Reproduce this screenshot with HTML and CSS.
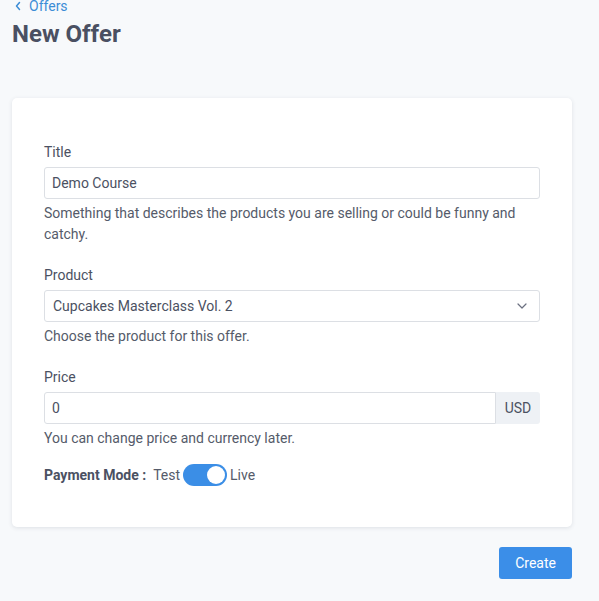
FILE: index.html
```html
<!DOCTYPE html>
<html>
<head>
<meta charset="utf-8">
<link rel="stylesheet" href="styles.css">
</head>
<body>
<div class="page">
  <a class="back" href="#"><svg class="back-icon" width="8" height="10" viewBox="0 0 8 10"><path d="M5.5 1.5 L2.5 5 L5.5 8.5" fill="none" stroke="currentColor" stroke-width="1.5" stroke-linecap="round" stroke-linejoin="round"/></svg>Offers</a>
  <h1 class="title">New Offer</h1>
  <div class="card">
    <div class="field">
      <label class="label">Title</label>
      <input class="input" type="text" value="Demo Course">
      <p class="help">Something that describes the products you are selling or could be funny and catchy.</p>
    </div>
    <div class="field">
      <label class="label">Product</label>
      <div class="select">
        <span>Cupcakes Masterclass Vol. 2</span>
        <svg class="chev" width="10" height="6" viewBox="0 0 10 6"><path d="M1 1 L5 5 L9 1" fill="none" stroke="#6b7080" stroke-width="1.2" stroke-linecap="round" stroke-linejoin="round"/></svg>
      </div>
      <p class="help">Choose the product for this offer.</p>
    </div>
    <div class="field">
      <label class="label">Price</label>
      <div class="group">
        <input class="input input-grp" type="text" value="0">
        <span class="addon">USD</span>
      </div>
      <p class="help">You can change price and currency later.</p>
    </div>
    <div class="mode">
      <span class="mode-label">Payment Mode :</span>
      <span class="mode-opt">Test</span>
      <span class="toggle"><span class="knob"></span></span>
      <span>Live</span>
    </div>
  </div>
  <div class="actions">
    <button class="btn">Create</button>
  </div>
</div>
</body>
</html>
```
FILE: styles.css
```css
html, body {
  margin: 0;
  padding: 0;
  background: #f7f9fb;
  font-family: Roboto, "Liberation Sans", sans-serif;
  font-size: 14px;
  color: #4b5162;
}
.page {
  width: 560px;
  padding: 0 12px;
}
.back {
  display: flex;
  align-items: center;
  gap: 7px;
  margin-top: -4px;
  margin-left: 2px;
  line-height: 20px;
  color: #3c8dd6;
  text-decoration: none;
}
.back-icon { display: block; }
.title {
  margin: 2px 0 48px;
  font-size: 24px;
  line-height: 32px;
  font-weight: 700;
  color: #4a5062;
}
.card {
  background: #fff;
  border-radius: 5px;
  box-shadow: 0 1px 4px rgba(40, 50, 70, 0.12);
  padding: 44px 32px 40px;
}
.field { margin-bottom: 20px; }
.field:nth-child(3) { margin-bottom: 14px; }
.label {
  display: block;
  line-height: 21px;
  margin-bottom: 4px;
  color: #4b5162;
}
.input {
  display: block;
  box-sizing: border-box;
  width: 100%;
  height: 32px;
  margin: 0;
  padding: 0 7px;
  border: 1px solid #dcdfe4;
  border-radius: 3px;
  font-family: inherit;
  font-size: 14px;
  color: #4b5162;
  background: #fff;
  outline: none;
}
.help {
  margin: 4px 0 0;
  line-height: 21px;
  color: #555b6a;
}
.select {
  box-sizing: border-box;
  height: 32px;
  display: flex;
  align-items: center;
  justify-content: space-between;
  padding: 0 12px 0 8px;
  border: 1px solid #dcdfe4;
  border-radius: 3px;
  color: #4b5162;
}
.chev { display: block; }
.group {
  display: flex;
  height: 32px;
}
.input-grp {
  flex: 1;
  border-radius: 3px 0 0 3px;
}
.addon {
  width: 44px;
  display: flex;
  align-items: center;
  justify-content: center;
  background: #eef1f5;
  color: #4b5162;
  border-radius: 0 3px 3px 0;
}
.mode {
  display: flex;
  align-items: center;
  height: 24px;
  color: #555b6a;
}
.mode-label {
  font-weight: 700;
  color: #4b5162;
  margin-right: 7px;
}
.toggle {
  width: 44px;
  height: 22px;
  margin: 0 3px;
  border-radius: 11px;
  background: #3b8ee6;
  display: flex;
  align-items: center;
  justify-content: flex-end;
  padding: 0 2px;
  box-sizing: border-box;
}
.knob {
  width: 18px;
  height: 18px;
  border-radius: 50%;
  background: #fff;
}
.actions {
  display: flex;
  justify-content: flex-end;
  margin-top: 20px;
}
.btn {
  height: 32px;
  padding: 0 16px;
  border: none;
  border-radius: 3px;
  background: #3b8ee8;
  color: #fff;
  font-family: inherit;
  font-size: 14px;
}
```
